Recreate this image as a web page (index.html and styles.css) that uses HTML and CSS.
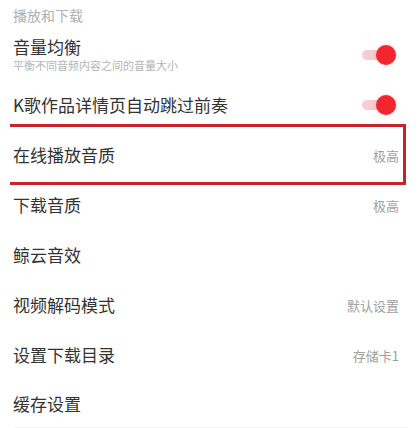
FILE: index.html
```html
<!DOCTYPE html>
<html lang="zh-CN">
<head>
<meta charset="utf-8">
<title>播放和下载</title>
<link rel="stylesheet" href="styles.css">
</head>
<body>
<div class="page">
  <div class="section-title">播放和下载</div>

  <div class="row">
    <div class="text-block">
      <div class="title">音量均衡</div>
      <div class="subtitle">平衡不同音频内容之间的音量大小</div>
    </div>
    <div class="toggle"></div>
  </div>

  <div class="row">
    <div class="title">K歌作品详情页自动跳过前奏</div>
    <div class="toggle"></div>
  </div>

  <div class="row highlighted">
    <div class="title">在线播放音质</div>
    <div class="value">极高</div>
    <div class="mark-box"></div>
  </div>

  <div class="row">
    <div class="title">下载音质</div>
    <div class="value">极高</div>
  </div>

  <div class="row">
    <div class="title">鲸云音效</div>
  </div>

  <div class="row">
    <div class="title">视频解码模式</div>
    <div class="value">默认设置</div>
  </div>

  <div class="row">
    <div class="title">设置下载目录</div>
    <div class="value">存储卡1</div>
  </div>

  <div class="row row-last">
    <div class="title">缓存设置</div>
  </div>
  <div class="divider"></div>
</div>
</body>
</html>
```

FILE: styles.css
```css
html, body {
  margin: 0;
  padding: 0;
  background: #ffffff;
}

body {
  font-family: "Noto Sans CJK SC", "Noto Sans", sans-serif;
  color: #333333;
  overflow: hidden;
}

.page {
  width: 419px;
  display: flex;
  flex-direction: column;
}

.section-title {
  height: 30px;
  display: flex;
  align-items: center;
  padding-left: 13px;
  font-size: 14px;
  color: #b0b0b0;
}

.row {
  height: 50px;
  display: flex;
  align-items: center;
  justify-content: space-between;
  padding: 0 20px 0 13px;
  position: relative;
}

.row-last {
  height: 47px;
}

.text-block {
  display: flex;
  flex-direction: column;
  gap: 3px;
}

.title {
  font-size: 17px;
  line-height: 20px;
  color: #333333;
}

.text-block .title {
  line-height: 18px;
}

.subtitle {
  font-size: 11px;
  line-height: 13px;
  color: #b4b4b4;
}

.value {
  font-size: 13px;
  color: #a0a0a0;
}

.toggle {
  position: relative;
  width: 34px;
  height: 20px;
  margin-right: 3px;
}

.toggle::before {
  content: "";
  position: absolute;
  left: 0;
  top: 5px;
  width: 28px;
  height: 10px;
  border-radius: 5px;
  background: #f7cdd0;
}

.toggle::after {
  content: "";
  position: absolute;
  right: 0;
  top: 0;
  width: 20px;
  height: 20px;
  border-radius: 50%;
  background: #f2262e;
  box-shadow: 0 0 3px rgba(240, 60, 60, 0.35);
}

.mark-box {
  position: absolute;
  left: 10px;
  right: 13px;
  top: -6px;
  bottom: -5px;
  border: 3px solid #c8222b;
  border-left: none;
  pointer-events: none;
}

.divider {
  height: 1px;
  margin: 0 11px 0 15px;
  background: #f2f2f2;
}
```
